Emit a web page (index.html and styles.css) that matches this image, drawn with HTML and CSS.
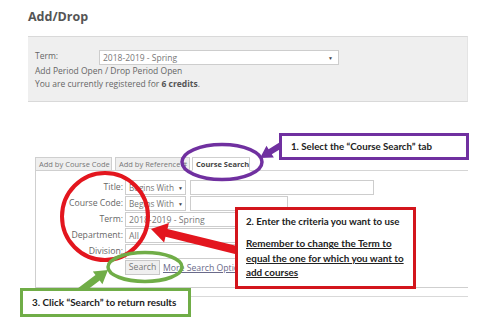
FILE: index.html
```html
<!DOCTYPE html>
<html>
<head>
<meta charset="utf-8">
<link rel="stylesheet" href="styles.css">
</head>
<body>
<div class="page">
  <h1 class="title">Add/Drop</h1>
  <div class="term-panel">
    <div class="term-row">
      <span class="term-label">Term:</span>
      <div class="select term-select"><span>2018-2019 - Spring</span><span class="caret">▼</span></div>
    </div>
    <div class="info">Add Period Open / Drop Period Open</div>
    <div class="info">You are currently registered for <b>6 credits</b>.</div>
  </div>

  <div class="tabs-area">
    <div class="tabs">
      <div class="tab tab-code">Add by Course Code</div>
      <div class="tab tab-ref">Add by Reference #</div>
      <div class="tab tab-active">Course Search</div>
    </div>
    <div class="search-panel">
      <div class="form">
        <label class="lbl">Title:</label>
        <div class="fields">
          <div class="select small"><span>Begins With</span><span class="caret">▼</span></div>
          <div class="input input-long"></div>
        </div>
        <label class="lbl">Course Code:</label>
        <div class="fields">
          <div class="select small"><span>Begins With</span><span class="caret">▼</span></div>
          <div class="input input-short"></div>
        </div>
        <label class="lbl">Term:</label>
        <div class="fields">
          <div class="select medium"><span>2018-2019 - Spring</span></div>
        </div>
        <label class="lbl">Department:</label>
        <div class="fields">
          <div class="select medium"><span>All</span></div>
        </div>
        <label class="lbl">Division:</label>
        <div class="fields">
          <div class="select medium"><span></span></div>
        </div>
        <span></span>
        <div class="fields">
          <div class="button">Search</div>
          <a class="more">More Search Options</a>
        </div>
      </div>
    </div>
  </div>
  <div class="outer-bottom"></div>
</div>

<svg class="overlay" width="500" height="334" viewBox="0 0 500 334">
  <ellipse cx="222" cy="162" rx="40" ry="17.5" fill="none" stroke="#7030a0" stroke-width="3.5"/>
  <polygon fill="#7030a0" points="260,158 266.5,145.8 268.6,149.2 281.4,141.3 284.6,146.4 271.8,154.3 273.9,157.6"/>
  <ellipse cx="105" cy="216.5" rx="43" ry="43.5" fill="none" stroke="#e3161e" stroke-width="4"/>
  <polygon fill="#e3161e" points="151,229 168.9,223.1 167.5,228.9 239,246.6 237,254.4 165.5,236.7 164.1,242.5"/>
  <ellipse cx="145" cy="267" rx="37" ry="14.5" fill="none" stroke="#70ad47" stroke-width="3.5"/>
  <polygon fill="#70ad47" points="108,270 92.8,271.4 95.5,275 75.9,289.7 80.1,295.3 99.7,280.6 102.4,284.2"/>
</svg>

<div class="note note-purple">1. Select the “Course Search” tab</div>
<div class="note note-red">
  <p class="note-head">2. Enter the criteria you want to use</p>
  <p class="note-sub">Remember to change the Term to<br>equal the one for which you want to<br>add courses</p>
</div>
<div class="note note-green">3. Click “Search” to return results</div>
</body>
</html>
```

FILE: styles.css
```css
html, body {
  margin: 0;
  padding: 0;
  background: #ffffff;
}
body {
  width: 500px;
  height: 334px;
  position: relative;
  overflow: hidden;
  font-family: "Open Sans", "Noto Sans", sans-serif;
  font-size: 8.5px;
  color: #666;
}
.page {
  box-sizing: border-box;
  padding: 9px 0 0 28px;
  width: 468px;
}
.title {
  margin: 0;
  font-size: 12.5px;
  line-height: 16px;
  font-weight: 700;
  color: #555;
}
.term-panel {
  box-sizing: border-box;
  width: 440px;
  margin-top: 11px;
  height: 66px;
  padding: 13px 7px 0;
  background: #efefef;
  border-top: 1px solid #d9d9d9;
  border-bottom: 1px solid #d9d9d9;
  border-right: 1px solid #e4e4e4;
}
.term-row {
  display: flex;
  align-items: center;
  height: 15px;
}
.term-label {
  width: 64px;
  align-self: flex-start;
  line-height: 11px;
}
.info {
  line-height: 12.5px;
}
.info b {
  color: #555;
}
.select {
  box-sizing: border-box;
  height: 15px;
  border: 1px solid #cdcdcd;
  background: #fff;
  display: flex;
  align-items: center;
  justify-content: space-between;
  padding: 0 3px 0 3px;
  color: #777;
  font-size: 8.7px;
  white-space: nowrap;
  overflow: hidden;
}
.small {
  width: 61px;
  font-size: 8.2px;
  padding-right: 2px;
}
.term-select {
  width: 240px;
  font-size: 8.5px;
  padding-right: 5px;
}
.caret {
  font-size: 5px;
  color: #444;
}
.tabs-area {
  box-sizing: border-box;
  margin: 54px 0 0 7px;
  width: 433px;
}
.tabs {
  display: flex;
  align-items: flex-end;
  height: 14px;
  border-bottom: 1px solid #d5d5d5;
}
.tab {
  box-sizing: border-box;
  height: 14px;
  margin-bottom: -1px;
  border: 1px solid #cfcfcf;
  background: #efefef;
  font-size: 7.5px;
  line-height: 12px;
  padding: 0 3px;
  color: #777;
  white-space: nowrap;
}
.tab-code { width: 77px; margin-right: 3px; }
.tab-ref { width: 75px; margin-right: 2px; overflow: hidden; }
.tab-active {
  width: 58px;
  background: #fff;
  border-bottom-color: #fff;
  font-weight: 700;
  color: #444;
}
.search-panel {
  height: 107px;
  padding-top: 9px;
  border-left: 1px solid #cfcfcf;
  border-bottom: 1px solid #cfcfcf;
}
.form {
  display: grid;
  grid-template-columns: 87px 1fr;
  column-gap: 2px;
  grid-auto-rows: 15px;
  row-gap: 1px;
}
.lbl {
  text-align: right;
  line-height: 14px;
  color: #666;
  font-size: 8.7px;
}
.fields {
  display: flex;
  align-items: center;
  gap: 4px;
}
.medium { width: 125px; }
.input {
  box-sizing: border-box;
  height: 15px;
  border: 1px solid #cdcdcd;
  background: #fff;
}
.input-long { width: 184px; }
.input-short { width: 98px; }
.button {
  box-sizing: border-box;
  height: 15px;
  width: 35px;
  border: 1px solid #c8c8c8;
  background: #efefef;
  color: #777;
  font-size: 8.7px;
  line-height: 13px;
  text-align: center;
}
.more {
  margin-left: -1px;
  color: #6a6a8a;
  text-decoration: underline;
  font-size: 8.7px;
  white-space: nowrap;
}
.outer-bottom {
  margin-top: 8px;
  width: 440px;
  border-top: 1px solid #d9d9d9;
}
.overlay {
  position: absolute;
  left: 0;
  top: 0;
}
.note {
  position: absolute;
  box-sizing: border-box;
  background: #fff;
  font-family: "Lato", "Liberation Sans", sans-serif;
  font-weight: 700;
  color: #222;
  font-size: 9.7px;
}
.note-purple {
  left: 279px;
  top: 133px;
  width: 190px;
  height: 27px;
  border: 3.5px solid #7030a0;
  padding-left: 9px;
  line-height: 20px;
}
.note-red {
  left: 235px;
  top: 207px;
  width: 181px;
  height: 82px;
  border: 3px solid #d3151c;
  padding: 5px 0 0 8px;
}
.note-red p {
  margin: 0;
}
.note-head {
  line-height: 13px;
  margin-bottom: 8px !important;
}
.note-sub {
  text-decoration: underline;
  line-height: 14.5px;
  font-size: 9.9px;
}
.note-green {
  left: 20px;
  top: 288px;
  width: 171px;
  height: 29px;
  border: 3.5px solid #70ad47;
  padding-left: 9px;
  line-height: 22px;
  font-size: 9.9px;
}
```
